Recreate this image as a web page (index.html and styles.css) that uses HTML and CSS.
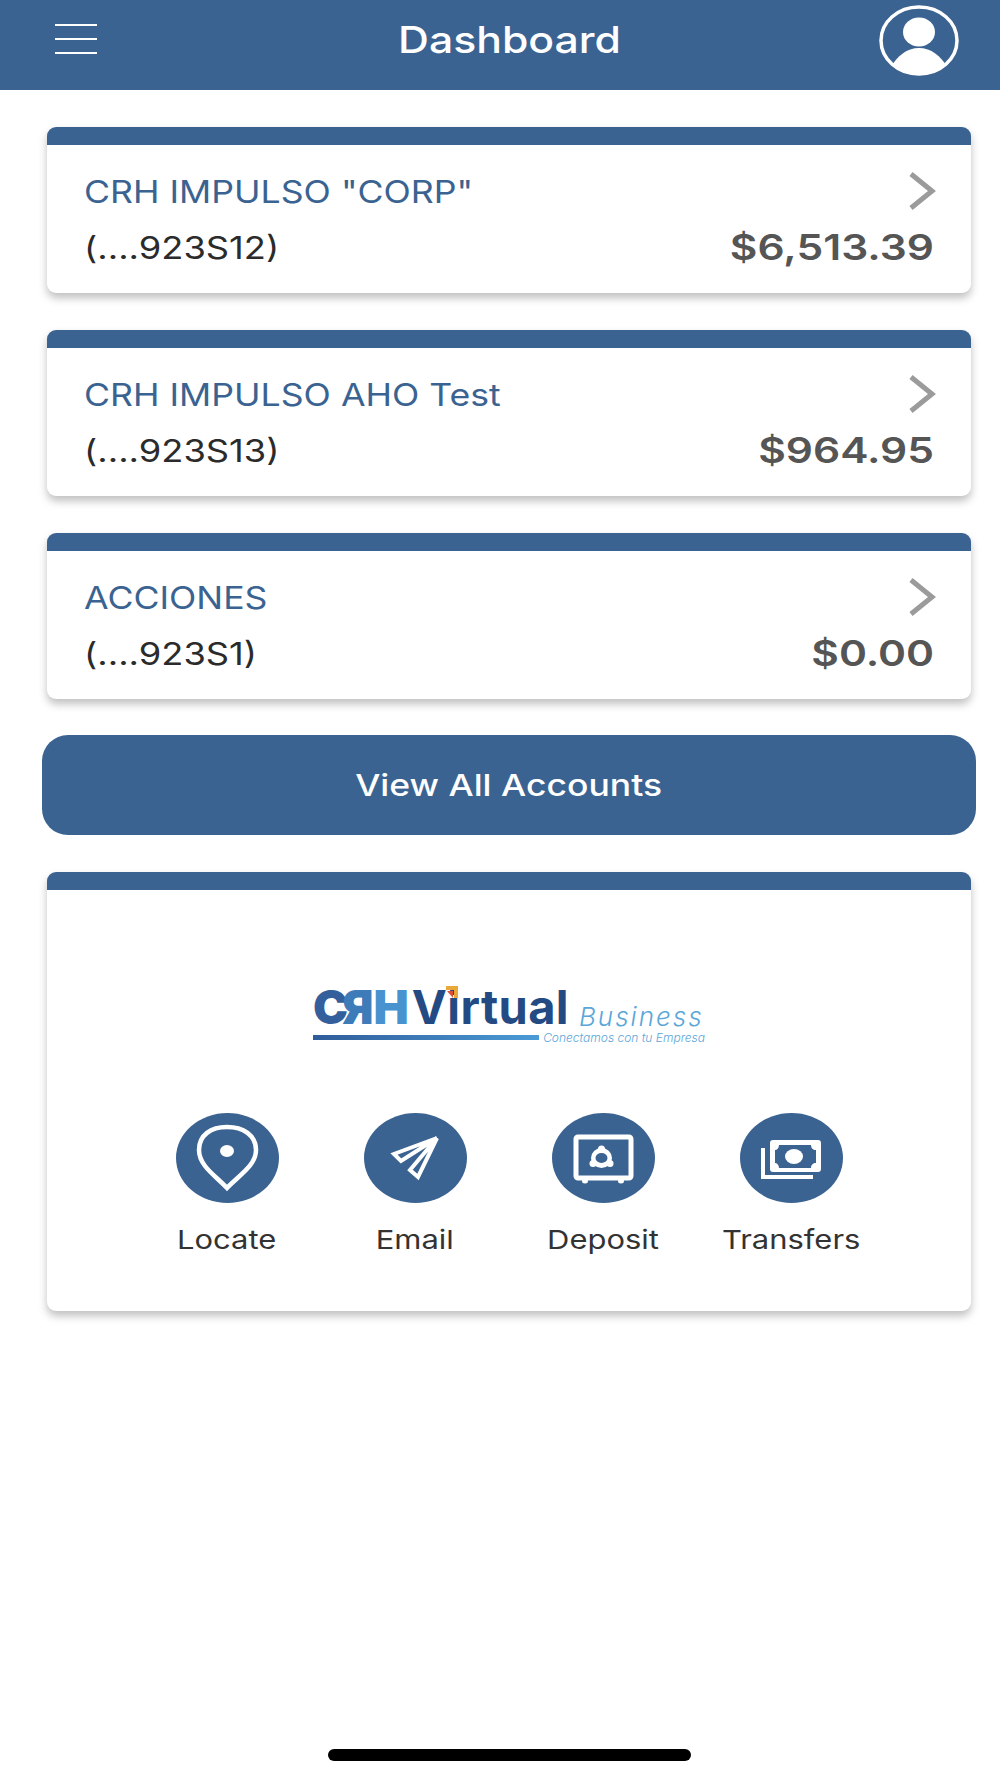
FILE: index.html
```html
<!DOCTYPE html>
<html lang="en">
<head>
    <meta charset="UTF-8">
    <meta name="viewport" content="width=device-width, initial-scale=1.0">
    <title>Dashboard</title>
    <link rel="stylesheet" href="styles.css">
</head>
<body>
    <header class="topbar">
        <div class="menu-btn"><span></span><span></span><span></span></div>
        <h1 class="topbar-title">Dashboard</h1>
        <svg class="avatar" width="80" height="71" viewBox="0 0 80 71">
            <defs><clipPath id="avatarClip"><ellipse cx="40" cy="35.5" rx="38" ry="33.5"/></clipPath></defs>
            <ellipse cx="40" cy="35.5" rx="38" ry="33.5" fill="none" stroke="#fff" stroke-width="3.5"/>
            <ellipse cx="40" cy="27" rx="16" ry="14.5" fill="#fff"/>
            <path d="M12 62 C18 51 28 43 40 43 C52 43 62 51 68 62 L68 71 L12 71 Z" fill="#fff" clip-path="url(#avatarClip)"/>
        </svg>
    </header>

    <main class="content">
        <a class="card account">
            <div class="account-row">
                <span class="account-name">CRH IMPULSO "CORP"</span>
                <svg class="chevron" width="28" height="38" viewBox="0 0 28 38"><path d="M3 2 L24 19 L3 36" fill="none" stroke="#9b9b9b" stroke-width="5"/></svg>
            </div>
            <div class="account-row">
                <span class="account-num">(....923S12)</span>
                <span class="account-amount">$6,513.39</span>
            </div>
        </a>
        <a class="card account">
            <div class="account-row">
                <span class="account-name">CRH IMPULSO AHO Test</span>
                <svg class="chevron" width="28" height="38" viewBox="0 0 28 38"><path d="M3 2 L24 19 L3 36" fill="none" stroke="#9b9b9b" stroke-width="5"/></svg>
            </div>
            <div class="account-row">
                <span class="account-num">(....923S13)</span>
                <span class="account-amount">$964.95</span>
            </div>
        </a>
        <a class="card account">
            <div class="account-row">
                <span class="account-name">ACCIONES</span>
                <svg class="chevron" width="28" height="38" viewBox="0 0 28 38"><path d="M3 2 L24 19 L3 36" fill="none" stroke="#9b9b9b" stroke-width="5"/></svg>
            </div>
            <div class="account-row">
                <span class="account-num">(....923S1)</span>
                <span class="account-amount">$0.00</span>
            </div>
        </a>

        <button class="all-btn"><span>View All Accounts</span></button>

        <section class="card shortcuts">
            <div class="logo">
                <div class="logo-top">
                    <span class="logo-crh"><span class="crh-c">C</span><span class="crh-r">R</span><span class="crh-h">H</span></span>
                    <span class="logo-virtual">Virtual</span>
                    <span class="logo-business">Business</span>
                    <svg class="logo-spark" width="14" height="14" viewBox="0 0 14 14">
                        <path d="M1 1 H13 V13 H9 V5 H1 Z" fill="#e9a93a"/>
                        <path d="M2 6 H8 V13 Z" fill="#dd4f38"/>
                    </svg>
                </div>
                <div class="logo-bottom">
                    <div class="logo-bar"></div>
                    <span class="logo-tag">Conectamos con tu Empresa</span>
                </div>
            </div>

            <div class="actions">
                <div class="action">
                    <svg class="action-icon" width="103" height="90" viewBox="0 0 103 90">
                        <ellipse cx="51.5" cy="45" rx="51.5" ry="45" fill="#3b6391"/>
                        <path d="M51 75 C40 63 23 53 23 37 C23 22 35 14 51 14 C67 14 80 22 80 37 C80 53 62 63 51 75 Z" fill="none" stroke="#fff" stroke-width="4.5"/>
                        <ellipse cx="51" cy="38" rx="7" ry="6" fill="#fff"/>
                    </svg>
                    <span class="action-label">Locate</span>
                </div>
                <div class="action">
                    <svg class="action-icon" width="103" height="90" viewBox="0 0 103 90">
                        <ellipse cx="51.5" cy="45" rx="51.5" ry="45" fill="#3b6391"/>
                        <path d="M73 25 L30 41 L37 48 Z M73 25 L46 57 L54 64 Z" fill="none" stroke="#fff" stroke-width="4"/>
                    </svg>
                    <span class="action-label">Email</span>
                </div>
                <div class="action">
                    <svg class="action-icon" width="103" height="90" viewBox="0 0 103 90">
                        <ellipse cx="51.5" cy="45" rx="51.5" ry="45" fill="#3b6391"/>
                        <rect x="24" y="24" width="55" height="41" rx="2" fill="none" stroke="#fff" stroke-width="5"/>
                        <ellipse cx="33" cy="68" rx="3" ry="2.5" fill="#fff"/>
                        <ellipse cx="69" cy="68" rx="3" ry="2.5" fill="#fff"/>
                        <ellipse cx="49.5" cy="45" rx="10.5" ry="10" fill="#fff"/>
                        <circle cx="49.5" cy="36" r="3.5" fill="#fff"/>
                        <circle cx="41" cy="50.5" r="3.5" fill="#fff"/>
                        <circle cx="58" cy="50.5" r="3.5" fill="#fff"/>
                        <ellipse cx="49.5" cy="45" rx="6" ry="5" fill="#3b6391"/>
                    </svg>
                    <span class="action-label">Deposit</span>
                </div>
                <div class="action">
                    <svg class="action-icon" width="103" height="90" viewBox="0 0 103 90">
                        <ellipse cx="51.5" cy="45" rx="51.5" ry="45" fill="#3b6391"/>
                        <path d="M23 35 V64 H73" fill="none" stroke="#fff" stroke-width="4"/>
                        <rect x="30" y="27" width="51" height="32" rx="3" fill="#fff"/>
                        <path d="M39 32 H71 C71 35 73 37 76 37 V50 C73 50 71 52 71 55 H39 C39 52 37 50 35 50 V37 C37 37 39 35 39 32 Z" fill="#3b6391"/>
                        <ellipse cx="54" cy="43.5" rx="9" ry="7.5" fill="#fff"/>
                    </svg>
                    <span class="action-label">Transfers</span>
                </div>
            </div>
        </section>
    </main>

    <div class="home-bar"></div>
</body>
</html>
```

FILE: styles.css
```css
* {
    margin: 0;
    padding: 0;
    box-sizing: border-box;
}
body {
    display: flex;
    flex-direction: column;
    min-height: 100vh;
    background-color: #fff;
    font-family: Inter, "Liberation Sans", sans-serif;
}
.topbar {
    display: grid;
    grid-template-columns: 1fr auto 1fr;
    align-items: center;
    height: 90px;
    padding: 0 37px 8px 55px;
    background-color: #3b6391;
}
.menu-btn {
    display: flex;
    flex-direction: column;
    gap: 12px;
    width: 42px;
    margin-bottom: 4px;
}
.menu-btn span {
    height: 2px;
    background-color: #fff;
}
.topbar-title {
    margin-bottom: 4px;
    color: #fff;
    font-size: 37px;
    font-weight: 500;
    transform: scaleX(1.155);
}
.avatar {
    justify-self: end;
    margin: 0 4px 2px 0;
}
.content {
    display: flex;
    flex-direction: column;
    align-items: center;
    padding: 37px 24px 0 42px;
}
.card {
    width: 924px;
    border-top: 18px solid #3b6391;
    border-radius: 9px;
    background-color: #fff;
    box-shadow: 0 5px 8px rgba(0, 0, 0, 0.25);
}
.account {
    display: flex;
    flex-direction: column;
    gap: 18px;
    height: 166px;
    margin-bottom: 37px;
    padding: 27px 37px 0;
}
.account-row {
    display: flex;
    justify-content: space-between;
    align-items: center;
    height: 38px;
}
.account-name {
    color: #3b6391;
    font-size: 31px;
    transform: scaleX(1.15);
    transform-origin: left;
}
.account-num {
    color: #2b2b2b;
    font-size: 31px;
    transform: scaleX(1.17);
    transform-origin: left;
}
.account-amount {
    color: #555;
    font-size: 36px;
    font-weight: 600;
    transform: scaleX(1.18);
    transform-origin: right;
}
.chevron {
    margin-right: -2px;
}
.all-btn {
    display: block;
    width: 934px;
    height: 100px;
    margin: -1px 0 37px;
    border: none;
    border-radius: 26px;
    background-color: #3b6391;
    color: #fff;
    font-family: inherit;
    font-size: 30px;
    font-weight: 500;
}
.all-btn span {
    display: inline-block;
    transform: scaleX(1.184);
}
.shortcuts {
    height: 439px;
    padding-top: 95px;
}
.logo {
    width: 392px;
    margin: 0 auto 68px;
}
.logo-top {
    position: relative;
    display: flex;
    align-items: baseline;
    height: 44px;
    line-height: 44px;
    white-space: nowrap;
}
.logo-crh {
    font-size: 47px;
    font-weight: 900;
    letter-spacing: -3px;
}
.crh-c {
    color: #33609c;
}
.crh-r {
    display: inline-block;
    color: #3d7bb9;
    transform: scaleX(-1);
}
.crh-h {
    color: #4792cf;
}
.logo-virtual {
    margin-left: 6px;
    color: #234a82;
    font-size: 47px;
    font-weight: 700;
    letter-spacing: 0.4px;
}
.logo-business {
    margin-left: 10px;
    color: #5ba6d8;
    font-size: 26px;
    font-style: italic;
    font-weight: 300;
    letter-spacing: 2px;
    transform: translateY(2px);
}
.logo-spark {
    position: absolute;
    top: 0;
    left: 132px;
}
.logo-bottom {
    display: flex;
    align-items: center;
    gap: 4px;
    margin-top: 1px;
}
.logo-bar {
    flex: 1;
    height: 5px;
    background: linear-gradient(90deg, #2f5c9a, #4a9bd6);
}
.logo-tag {
    color: #5ba6d8;
    font-size: 12px;
    font-style: italic;
    font-weight: 300;
    white-space: nowrap;
}
.actions {
    display: grid;
    grid-template-columns: repeat(4, 188px);
    justify-content: center;
}
.action {
    display: flex;
    flex-direction: column;
    align-items: center;
    gap: 21px;
}
.action-icon {
    display: block;
}
.action-label {
    color: #333;
    font-size: 26px;
    transform: scaleX(1.19);
    white-space: nowrap;
}
.home-bar {
    width: 363px;
    height: 12px;
    margin: auto 0 17px 328px;
    border-radius: 6px;
    background-color: #000;
}
```
